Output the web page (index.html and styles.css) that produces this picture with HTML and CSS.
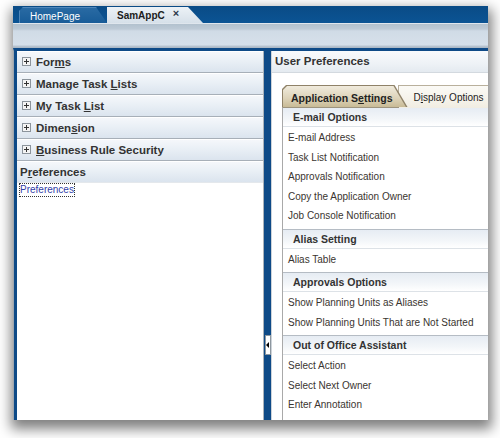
FILE: index.html
```html
<!DOCTYPE html>
<html>
<head>
<meta charset="utf-8">
<link rel="stylesheet" href="styles.css">
</head>
<body>
<div class="window">
  <div class="tabbar">
    <div class="apptab home"><span class="apptab-label">HomePage</span></div>
    <div class="apptab active"><span class="apptab-label bold">SamAppC</span><span class="close">×</span></div>
  </div>
  <div class="toolbar"></div>
  <div class="main">
    <div class="leftpanel">
      <div class="acc"><svg class="plus" width="9" height="9" viewBox="0 0 9 9"><rect x="0.5" y="0.5" width="8" height="8" fill="#f4f4f4" stroke="#8c949c"/><path d="M2 4.5h5M4.5 2v5" stroke="#333" stroke-width="1"/></svg><span>For<u>m</u>s</span></div>
      <div class="acc"><svg class="plus" width="9" height="9" viewBox="0 0 9 9"><rect x="0.5" y="0.5" width="8" height="8" fill="#f4f4f4" stroke="#8c949c"/><path d="M2 4.5h5M4.5 2v5" stroke="#333" stroke-width="1"/></svg><span>Manage Task <u>L</u>ists</span></div>
      <div class="acc"><svg class="plus" width="9" height="9" viewBox="0 0 9 9"><rect x="0.5" y="0.5" width="8" height="8" fill="#f4f4f4" stroke="#8c949c"/><path d="M2 4.5h5M4.5 2v5" stroke="#333" stroke-width="1"/></svg><span>My Task <u>L</u>ist</span></div>
      <div class="acc"><svg class="plus" width="9" height="9" viewBox="0 0 9 9"><rect x="0.5" y="0.5" width="8" height="8" fill="#f4f4f4" stroke="#8c949c"/><path d="M2 4.5h5M4.5 2v5" stroke="#333" stroke-width="1"/></svg><span>Dimen<u>s</u>ion</span></div>
      <div class="acc"><svg class="plus" width="9" height="9" viewBox="0 0 9 9"><rect x="0.5" y="0.5" width="8" height="8" fill="#f4f4f4" stroke="#8c949c"/><path d="M2 4.5h5M4.5 2v5" stroke="#333" stroke-width="1"/></svg><span><u>B</u>usiness Rule Security</span></div>
      <div class="acc open"><span>P<u>r</u>eferences</span></div>
      <div class="acc-body"><span class="link">Preferences</span></div>
    </div>
    <div class="splitter"><div class="handle"><span class="tri"></span></div></div>
    <div class="rightpanel">
      <div class="rp-header">User Preferences</div>
      <div class="tabs">
        <div class="tab sel"><div class="tab-in">Application S<u>e</u>ttings</div></div>
        <div class="tab unsel"><div class="tab-in">D<u>i</u>splay Options</div></div>
      </div>
      <div class="content">
        <div class="section">
          <div class="sec-head">E-mail Options</div>
          <div class="sec-items">
            <div class="item">E-mail Address</div>
            <div class="item">Task List Notification</div>
            <div class="item">Approvals Notification</div>
            <div class="item">Copy the Application Owner</div>
            <div class="item">Job Console Notification</div>
          </div>
        </div>
        <div class="section">
          <div class="sec-head">Alias Setting</div>
          <div class="sec-items">
            <div class="item">Alias Table</div>
          </div>
        </div>
        <div class="section">
          <div class="sec-head">Approvals Options</div>
          <div class="sec-items">
            <div class="item">Show Planning Units as Aliases</div>
            <div class="item">Show Planning Units That are Not Started</div>
          </div>
        </div>
        <div class="section">
          <div class="sec-head">Out of Office Assistant</div>
          <div class="sec-items">
            <div class="item">Select Action</div>
            <div class="item">Select Next Owner</div>
            <div class="item">Enter Annotation</div>
          </div>
        </div>
      </div>
    </div>
  </div>
</div>
</body>
</html>
```

FILE: styles.css
```css
html, body {
  margin: 0;
  padding: 0;
  background: #ffffff;
}
body {
  width: 500px;
  height: 438px;
  overflow: hidden;
  font-family: "Liberation Sans", Arial, sans-serif;
  color: #333;
}
.window {
  width: 475px;
  height: 414px;
  margin: 6px 0 0 13px;
  background: #fff;
  display: flex;
  flex-direction: column;
  overflow: hidden;
  box-shadow: 1px 6px 12px 3px rgba(0, 0, 0, 0.5);
}
/* top application tabs */
.tabbar {
  height: 17px;
  flex: none;
  background: linear-gradient(#0a4b86, #0b5494);
  display: flex;
  align-items: flex-end;
  padding-left: 6px;
}
.apptab {
  height: 16px;
  display: flex;
  align-items: center;
  font-size: 10px;
  box-sizing: border-box;
}
.apptab.home {
  width: 88px;
  padding-left: 11px;
  padding-top: 2px;
  background: linear-gradient(#2a6ba4, #185c98);
  color: #fff;
  clip-path: polygon(0 4px, 4px 0, calc(100% - 11px) 0, 100% 100%, 0 100%);
  box-shadow: inset 1px 1px #4f86b9;
}
.apptab.active {
  width: 96px;
  height: 17px;
  padding-left: 10px;
  padding-top: 1px;
  background: linear-gradient(#eef3f7, #d6e0e9);
  color: #1c1c1c;
  clip-path: polygon(0 1px, calc(100% - 15px) 1px, 100% 100%, 0 100%);
}
.bold { font-weight: bold; }
.close {
  margin-left: 8px;
  font-weight: bold;
  font-size: 11px;
  color: #2b3a4a;
  margin-top: -4px;
}
.toolbar {
  height: 25px;
  flex: none;
  background: linear-gradient(#dfe6ed 0, #dfe6ed 1px, #b2c1ce 1px, #bdcad6 6px, #d0dbe6 8px, #d6e0ea 22px, #bac6d2 23px, #a9b6c3 25px);
}
/* main area */
.main {
  flex: 1;
  min-height: 0;
  display: flex;
  border-top: 3px solid #0e4a87;
  border-left: 1px solid #9ea7b0;
}
.leftpanel {
  width: 246px;
  flex: none;
  border-left: 3px solid #0e4a87;
  border-right: 1px solid #aab2ba;
  background: #fff;
  display: flex;
  flex-direction: column;
}
.acc {
  height: 21px;
  flex: none;
  border-bottom: 1px solid #a7afb8;
  background: linear-gradient(#f6f8fb, #eaf0f6 45%, #dbe4ee);
  display: flex;
  align-items: center;
  padding-left: 5px;
  font-size: 11.5px;
  font-weight: bold;
  color: #333;
  box-shadow: inset 0 1px #ffffff;
}
.plus {
  flex: none;
  margin-right: 5px;
}
.acc.open {
  padding-left: 3px;
  border-bottom-color: #e4e8ec;
}
.acc-body {
  padding: 1px 3px 0;
  line-height: 12px;
  font-size: 10px;
}
.link {
  display: inline-block;
  font-size: 10px;
  color: #3340a8;
  outline: 1px dotted #333;
  line-height: 12px;
  vertical-align: top;
}
.splitter {
  width: 7px;
  flex: none;
  background: #0e4a87;
  display: flex;
  flex-direction: column;
  align-items: center;
}
.handle {
  margin-top: 284px;
  width: 4px;
  height: 18px;
  background: #fff;
  border: 1px solid #8d979f;
  display: flex;
  align-items: center;
}
.tri {
  width: 0;
  height: 0;
  border-top: 3px solid transparent;
  border-bottom: 3px solid transparent;
  border-right: 3px solid #000;
}
.rightpanel {
  flex: 1;
  min-width: 0;
  border-left: 1px solid #cdd3d9;
  overflow: hidden;
  display: flex;
  flex-direction: column;
}
.rp-header {
  height: 21px;
  flex: none;
  border-bottom: 1px solid #d3d9df;
  background: linear-gradient(#f8fafc, #eef2f6 60%, #e4eaf0);
  padding-left: 3px;
  font-size: 11.5px;
  font-weight: bold;
  line-height: 21px;
  color: #333;
}
.tabs {
  margin: 12px 0 0 10px;
  display: flex;
  height: 22px;
  flex: none;
  white-space: nowrap;
}
.tab {
  height: 22px;
  padding: 1px 1px 0 1px;
  box-sizing: border-box;
  clip-path: polygon(0 100%, 0 4px, 4px 0, calc(100% - 13px) 0, 100% 100%);
}
.tab-in {
  height: 100%;
  display: flex;
  align-items: center;
  font-size: 10px;
  clip-path: polygon(0 100%, 0 4px, 4px 0, calc(100% - 13px) 0, 100% 100%);
}
.tab.sel {
  background: #8f8268;
  position: relative;
  z-index: 2;
}
.tab.sel .tab-in {
  padding: 1px 14px 0 8px;
  font-size: 10.5px;
  font-weight: bold;
  color: #222;
  background: linear-gradient(#f0ebdd, #ddd3b9 55%, #c6b892);
}
.tab.unsel {
  background: #b9b09c;
  margin-left: -10px;
  padding-right: 0;
  clip-path: none;
  z-index: 1;
}
.tab.unsel .tab-in {
  padding: 1px 20px 0 15px;
  color: #222;
  background: linear-gradient(#fbfaf6, #f1ede2);
  clip-path: none;
}
.content {
  flex: 1;
  margin-left: 10px;
  border-left: 1px solid #a9a9a9;
  border-top: 1px solid #9d947f;
}
.section {
  padding-bottom: 3px;
}
.sec-head {
  height: 19px;
  box-sizing: border-box;
  border-bottom: 1px solid #dde2e7;
  background: linear-gradient(#e6ecf3, #f3f6f9 60%, #ffffff);
  padding-left: 10px;
  font-size: 10.5px;
  font-weight: bold;
  line-height: 18px;
  color: #333;
}
.section + .section .sec-head {
  height: 20px;
  border-top: 1px solid #b5bcc4;
}
.sec-items {
  padding-top: 1px;
}
.item {
  height: 19.5px;
  line-height: 19.5px;
  padding-left: 5px;
  font-size: 10px;
  color: #3a3530;
  white-space: nowrap;
}
```
